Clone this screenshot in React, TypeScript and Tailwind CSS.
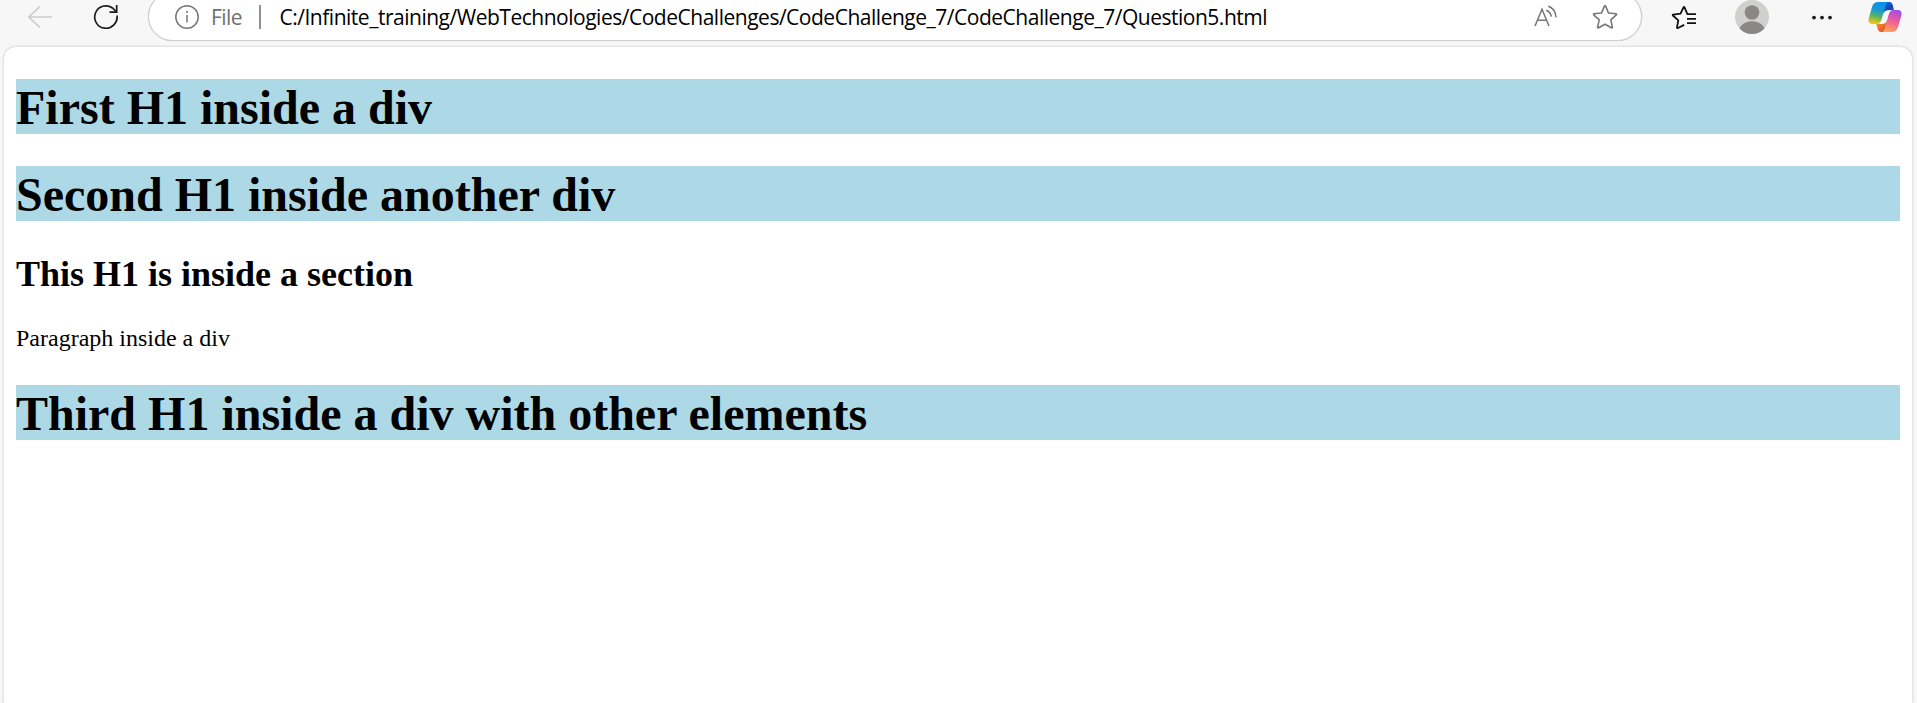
import type { ReactNode } from "react";

function BackIcon() {
  return (
    <svg className="ml-[27px] h-6 w-[26px] shrink-0" viewBox="0 0 26 24" fill="none" stroke="#cbcbcb" strokeWidth="1.5">
      <path d="M25 12H2M12.8 1.6L1.8 12L12.8 22.4" />
    </svg>
  );
}

function ReloadIcon() {
  return (
    <svg className="ml-10 h-[26px] w-[26px] shrink-0" viewBox="0 0 26 26" fill="none" stroke="#1b1b1b" strokeWidth="1.7">
      <path d="M24 11.5A11.2 11.2 0 1 1 19.5 4L23.6 8" />
      <path d="M23.7 1V8.2H16.5" />
    </svg>
  );
}

function InfoIcon() {
  return (
    <svg className="h-6 w-6 shrink-0" viewBox="0 0 24 24" fill="none" stroke="#767676" strokeWidth="1.5">
      <circle cx="12" cy="12" r="11.2" />
      <path d="M12 10V17.5" />
      <circle cx="12" cy="7" r="1.1" fill="#767676" stroke="none" />
    </svg>
  );
}

function ReadAloudIcon() {
  return (
    <svg className="h-6 w-6 shrink-0" viewBox="0 0 24 24" fill="none" stroke="#767676" strokeWidth="1.5">
      <path d="M1 21L8 4.3L15 21M3.4 15.2H12.6" />
      <path d="M12.2 5.2C15 6.2 16.8 8.5 17.4 11.7M14.2 1.2C18.5 2.5 21.5 6.5 22.1 12.5" />
    </svg>
  );
}

function StarIcon() {
  return (
    <svg className="h-6 w-[26px] shrink-0" viewBox="0 0 26 24" fill="none" stroke="#767676" strokeWidth="1.6" strokeLinejoin="round">
      <path d="M12.4 1.1Q13 .4 13.6 1.1L16.5 8L24 8.8Q24.8 9.1 24.3 9.8L18.8 14.8L20.4 22.1Q20.4 23.1 19.4 22.8L13 19.2L6.6 22.8Q5.6 23.1 5.6 22.1L7.2 14.8L1.7 9.8Q1.2 9.1 2 8.8L9.5 8Z" />
    </svg>
  );
}

function FavoritesIcon() {
  return (
    <svg className="ml-[29px] h-6 w-[26px] shrink-0" viewBox="0 0 26 24" fill="none" stroke="#111" strokeWidth="1.8" strokeLinejoin="round">
      <path d="M25 9.2H16.4L13.5 2.4Q13 1.6 12.5 2.4L9.5 8.7L2.2 9.6Q1.3 9.8 1.9 10.5L7.3 15.4L6 22.4Q6 23.5 7 23L13.2 19.9" />
      <path d="M16 13.8H25M16 18.2H25" />
    </svg>
  );
}

function Avatar() {
  return (
    <svg className="ml-[38px] h-[34px] w-[34px] shrink-0" viewBox="0 0 34 34">
      <defs>
        <clipPath id="avatar-clip">
          <circle cx="17" cy="17" r="17" />
        </clipPath>
      </defs>
      <g clipPath="url(#avatar-clip)">
        <rect width="34" height="34" fill="#d2d0cd" />
        <circle cx="17" cy="12.5" r="7.3" fill="#8a8784" />
        <ellipse cx="17" cy="31.5" rx="13" ry="10.3" fill="#8a8784" />
      </g>
    </svg>
  );
}

function MoreIcon() {
  return (
    <svg className="ml-[42px] h-6 w-[22px] shrink-0" viewBox="0 0 22 24" fill="#1b1b1b">
      <circle cx="3" cy="12.6" r="1.9" />
      <circle cx="11" cy="12.6" r="1.9" />
      <circle cx="19" cy="12.6" r="1.9" />
    </svg>
  );
}

function CopilotIcon() {
  return (
    <svg className="ml-[35px] h-8 w-[34px] shrink-0" viewBox="0 0 34 32">
      <defs>
        <linearGradient id="cp-left" x1=".6" y1="0" x2=".4" y2="1">
          <stop offset="0" stopColor="#0a8fe8" />
          <stop offset=".35" stopColor="#1599d8" />
          <stop offset=".65" stopColor="#52b36a" />
          <stop offset="1" stopColor="#f5c60c" />
        </linearGradient>
        <linearGradient id="cp-top" x1="0" y1="0" x2="1" y2="1">
          <stop offset="0" stopColor="#0c6fd8" />
          <stop offset=".6" stopColor="#1743bd" />
          <stop offset="1" stopColor="#2260df" />
        </linearGradient>
        <linearGradient id="cp-right" x1=".65" y1="0" x2=".35" y2="1">
          <stop offset="0" stopColor="#a44de8" />
          <stop offset=".45" stopColor="#ec5b99" />
          <stop offset="1" stopColor="#ffa45b" />
        </linearGradient>
        <linearGradient id="cp-bottom" x1="0" y1="0" x2="1" y2="1">
          <stop offset="0" stopColor="#f5a11c" />
          <stop offset="1" stopColor="#e33842" />
        </linearGradient>
      </defs>
      <path d="M15 1H21.5C23.3 1 24.2 2.4 24.8 4.3L26 9.2H20.5C18.8 9.2 17.8 10 17.2 12L14 12Z" fill="url(#cp-top)" />
      <path d="M19 31H13C11 31 10.2 29.6 9.6 27.7L8.2 22.8H13.5C15.3 22.8 16.2 22 16.8 20L20 20Z" fill="url(#cp-bottom)" />
      <path d="M10.5 1H20.5C18.8 1 18.2 2.5 17.6 4.5L13.8 18C12.8 21.3 11.5 23 8 23H4C1.2 23 .1 20.6.7 17.8L4 6C4.9 2.8 7 1 10.5 1Z" fill="url(#cp-left)" />
      <path d="M23.5 31H13.8C15.5 31 16.1 29.5 16.7 27.5L20.4 14C21.4 10.7 22.7 9 26 9H30C33 9 34.1 11.3 33.4 14.2L30 26C29.1 29.2 27 31 23.5 31Z" fill="url(#cp-right)" />
      <path d="M19.7 9.4H23.2C21.7 10.2 20.8 12 20.2 14.2L18.6 19.8C17.9 22 16.8 22.7 15 22.7H11.2C12.7 21.9 13.5 20 14.1 17.8L15.7 12.3C16.4 10.1 17.5 9.4 19.7 9.4Z" fill="#f9f9f9" />
    </svg>
  );
}

function AddressBar() {
  return (
    <div className="ml-[29px] -mt-2 flex h-[49px] w-[1494px] shrink-0 items-center rounded-full border border-[#cfcfcf] bg-white pr-[23px] pl-[26px] font-['Open_Sans','Noto_Sans',sans-serif] text-[21px] shadow-[0_0_1px_#bbb]">
      <InfoIcon />
      <span className="ml-3 w-[33px] pt-0.5 text-[21px] tracking-[-0.6px] text-[#707070]">File</span>
      <span className="ml-[15px] h-6 w-0.5 bg-[#909090]" />
      <span className="ml-[18.5px] grow pt-0.5 tracking-[-0.485px] whitespace-nowrap text-black">
        C:/Infinite_training/WebTechnologies/CodeChallenges/CodeChallenge_7/CodeChallenge_7/Question5.html
      </span>
      <div className="flex items-center gap-[34px]">
        <ReadAloudIcon />
        <StarIcon />
      </div>
    </div>
  );
}

function Banner({ children }: { children: ReactNode }) {
  return (
    <h1 className="h-[55px] bg-[#add8e6] pt-px text-[48px] leading-[55px] font-bold whitespace-nowrap">{children}</h1>
  );
}

export default function App() {
  return (
    <div className="flex h-[703px] w-full flex-col overflow-hidden bg-[#f7f7f7]">
      <header className="flex h-[47px] shrink-0 items-start">
        <div className="flex h-[33px] items-center">
          <BackIcon />
          <ReloadIcon />
        </div>
        <AddressBar />
        <div className="flex h-[34px] items-center">
          <FavoritesIcon />
          <Avatar />
          <MoreIcon />
          <CopilotIcon />
        </div>
      </header>
      <main className="mr-[5px] ml-1 grow rounded-t-[12px] bg-white px-3 pt-8 font-['Liberation_Serif',serif] text-black shadow-[0_0_3px_#bdbdbd]">
        <Banner>First H1 inside a div</Banner>
        <div className="mt-8">
          <Banner>Second H1 inside another div</Banner>
        </div>
        <section className="mt-8">
          <h1 className="text-[36px] leading-[42px] font-bold">This H1 is inside a section</h1>
        </section>
        <div className="mt-[30px]">
          <p className="text-[24px] leading-[27px]">Paragraph inside a div</p>
          <div className="mt-[33px]">
            <Banner>Third H1 inside a div with other elements</Banner>
          </div>
        </div>
      </main>
    </div>
  );
}
